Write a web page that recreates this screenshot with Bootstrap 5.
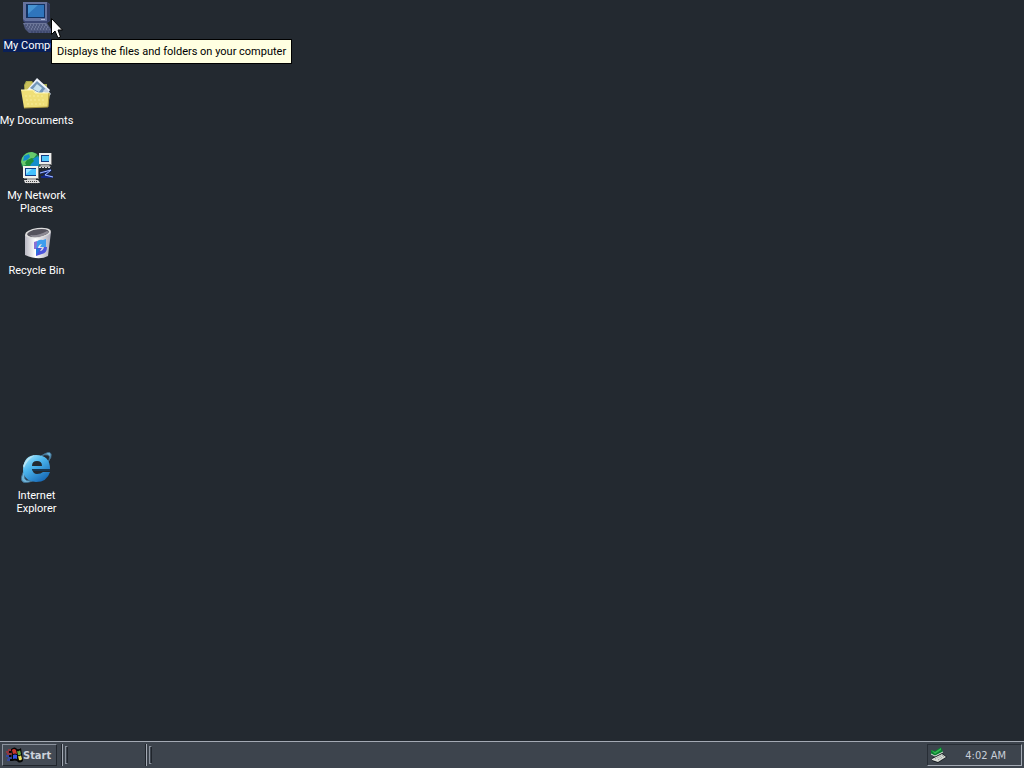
<!DOCTYPE html>
<html lang="en">
<head>
<meta charset="utf-8">
<meta name="viewport" content="width=device-width, initial-scale=1">
<title>Desktop</title>
<link href="https://cdn.jsdelivr.net/npm/bootstrap@5.3.0/dist/css/bootstrap.min.css" rel="stylesheet">
<style>
  body { background: #232930; color: #fff; font: 11px/13px "Roboto", "DejaVu Sans Condensed", sans-serif; cursor: default; }
  .icon-grid { display: grid; grid-template-columns: 73px; grid-template-rows: repeat(9, 75px); grid-auto-rows: 75px; }
  .shortcut { color: #fff; padding-top: 2px; gap: 5px; text-decoration: none; white-space: nowrap; }
  .shortcut svg { width: 32px; height: 32px; flex: none; }
  .shortcut.active .caption-text { background: #0a2058; }
  .slot-last { grid-row: 7; }
  .hint { left: 51px; top: 39px; padding: 6px 5px 5px; line-height: 12px; background: #ffffe1; color: #000; border: 1px solid #000; white-space: nowrap; z-index: 2; }
  .pointer { left: 51px; top: 18px; z-index: 3; }
  .taskbar { background: #3d444d; border-top: 1px solid #a4aab4; padding: 2px; height: 27px; }
  .start { font: bold 11px/13px "DejaVu Sans Condensed", sans-serif; color: #cdd3dc; background: #434a54; border: 1px solid; border-color: #8b929d #20252c #20252c #8b929d; padding: 0 3px; width: 55px; }
  .band { width: 84px; gap: 2px; }
  .bar-line { width: 2px; border-left: 1px solid #20252c; border-right: 1px solid #a4aab4; }
  .grip { width: 3px; margin: 2px 0; border: 1px solid #8b929d; border-right-color: #20252c; }
  .tray { width: 95px; border: 1px solid; border-color: #272d35 #a4aab4 #a4aab4 #272d35; color: #c9cfd8; padding: 1px 15px 0 2px; }
  .tray time { font: 11px/13px "DejaVu Sans Condensed", sans-serif; }
</style>
</head>
<body class="vh-100 d-flex flex-column overflow-hidden">
<main class="flex-fill position-relative overflow-hidden">
  <nav class="icon-grid" aria-label="Desktop icons">
    <a class="shortcut active d-flex flex-column align-items-center text-center" href="#computer">
      <svg viewBox="0 0 32 32" aria-hidden="true">
        <path d="M2 0H26L29 2V19L26 21H4L2 19Z" fill="#3c4773"/><path d="M2 0H26V19H4L2 17Z" fill="#66739e"/><path d="M26 1l3 2v15l-3 2Z" fill="#303a60"/>
        <path d="M5 2H24V16H5Z" fill="#123263"/><path d="M7 3H23V15H7Z" fill="#2f75bd"/><path d="M7 3H17L7 12Z" fill="#4793d2"/>
        <path d="M2 21H26L30 27V31H8L4 27Z" fill="#4d577c"/><path d="M2 21H25L29 28H8Z" fill="#6d7799"/>
        <path d="M4 23H25M6 25H27M8 27H28M10 30H29" stroke="#333c63" stroke-dasharray="2 1"/><path d="M20 17.500h4" stroke="#afb7d4"/>
      </svg>
      <span class="caption-text">My Computer</span>
    </a>
    <a class="shortcut d-flex flex-column align-items-center text-center" href="#documents">
      <svg viewBox="0 0 32 32" aria-hidden="true">
        <path d="M3 8l2-4h6l2 3h13v17H4Z" fill="#a7a94c"/><path d="M4 8l2-3h4l2 3v5H4" fill="#c9bf59"/>
        <path d="M16 1L29 13 23 23 6 13Z" fill="#eef3fb"/><path d="M16 4L25 12 20 17 9 11Z" fill="#7296b9"/><path d="M16 7l5 4-3 4-6-3Z" fill="#c7e2ee"/><path d="M25 11l5 6-2 2-6-5Z" fill="#c4d1e0"/>
        <path d="M0 13H13L15 16H29L27 30 3 31Z" fill="#efdf77"/><path d="M0 13H12L14 16H28" fill="none" stroke="#fff8b5"/><path d="M28 16L27 30 3 31" fill="none" stroke="#aa963d"/><path d="M4 19h20M5 23h19M6 27h17" stroke="#f8ed9b" stroke-dasharray="2 2"/>
      </svg>
      <span>My Documents</span>
    </a>
    <a class="shortcut d-flex flex-column align-items-center text-center" href="#network">
      <svg viewBox="0 0 32 32" aria-hidden="true">
        <circle cx="10" cy="10" r="10" fill="#188451"/><path d="M1 6Q4 0 11 0l5 2-3 4-4 1-2 5-5 2-2-4Z" fill="#68c96c"/><path d="M3 4l5-2 1 3-3 3-4 1ZM10 8l7-4 3 6-4 6-7-2Z" fill="#158dcb"/><path d="M6 8l5-2 2 3-4 4 3 4-5-2-3-4Z" fill="#219139"/>
        <path d="M18 1h12v11H18Z" fill="#eee"/><path d="M30 1h1v12H19v-1h11Z" fill="#777"/><path d="M20 3h8v7h-8Z" fill="#153b81"/><path d="M21 4h7v5h-7Z" fill="#53c8fa"/><path d="M20 13h8l2 2H18Z" fill="#aaa"/><path d="M18 15.500h12" stroke="#ddd" stroke-dasharray="2 1"/>
        <path d="M2 14h15v12H2Z" fill="#f3f3ec"/><path d="M17 14h1v13H3v-1h14Z" fill="#777"/><path d="M4 16h11v8H4Z" fill="#123c88"/><path d="M5 17h10v6H5Z" fill="#45c2ff"/><path d="M5 17h6l-6 5Z" fill="#96e6ff"/>
        <path d="M6 26h9v3H6Z" fill="#aaa"/><path d="M3 28h14l2 3H4Z" fill="#ddd"/><path d="M5 29.500h12M6 31.500h11" stroke="#444" stroke-dasharray="1 1"/>
        <path d="M19 21l11-3-6 5 8 2H20" fill="none" stroke="#142986" stroke-width="2"/><path d="M19 21l11-3-6 5 8 2" fill="none" stroke="#a6bfff"/>
      </svg>
      <span>My Network<br>Places</span>
    </a>
    <a class="shortcut d-flex flex-column align-items-center text-center" href="#recycle">
      <svg viewBox="0 0 32 32" aria-hidden="true">
        <defs><linearGradient id="bin"><stop stop-color="#b9b8c3"/><stop offset=".4" stop-color="#fff"/><stop offset="1" stop-color="#aaa9b7"/></linearGradient></defs>
        <path d="M4 8L30 5 27 29Q18 34 4 28Z" fill="url(#bin)"/><ellipse cx="17" cy="6" rx="13" ry="5" fill="#ddd" transform="rotate(-8 17 6)"/><ellipse cx="17" cy="6" rx="11" ry="3.800" fill="#55535d" transform="rotate(-8 17 6)"/><path d="M9 8q9 1 17-4l2 1q-6 6-17 5Z" fill="#8d8a94"/>
        <path d="M15 21V16q2-4 7-3l3-1v8h-6l2-3q-3 0-4 4Z" fill="#3d9ded"/><path d="M26 20q0 6-5 7l-6 2v-8h6l-2 3q3 0 4-4Z" fill="#4b54dc"/><path d="M13 15l3-1v3l-1 5h-2Z" fill="#8972d5"/><path d="M15 22h4l-3 5h-1Z" fill="#2676dc"/>
      </svg>
      <span>Recycle Bin</span>
    </a>
    <a class="shortcut slot-last d-flex flex-column align-items-center text-center" href="#internet">
      <svg viewBox="0 0 32 32" aria-hidden="true">
        <defs><linearGradient id="globe" x2=".7" y2="1"><stop stop-color="#b1efff"/><stop offset=".45" stop-color="#4cb5ed"/><stop offset="1" stop-color="#1769b6"/></linearGradient></defs>
        <path d="M20 4Q29-2 30 2 31 5 27 10 30 4 27 3 24 2 20 4ZM4 17Q-2 27 2 30 6 32 16 27 6 30 4 27 3 24 4 17Z" fill="#6eb4d9" stroke="#416f8f"/>
        <path fill-rule="evenodd" fill="url(#globe)" d="M29 17H11Q12 22 16 22 20 22 22 20H29Q26 30 15 30 2 29 2 17 3 3 15 3 29 3 29 17ZM11 14H21Q21 9 16 9 11 9 11 14Z"/>
        <path d="M2 14Q5 5 14 3 6 8 3 16Z" fill="#b8e4f4"/><path d="M11 17H29v2H12Z" fill="#173854"/>
      </svg>
      <span>Internet<br>Explorer</span>
    </a>
  </nav>
  <div class="hint position-absolute" role="tooltip">Displays the files and folders on your computer</div>
  <svg class="pointer position-absolute" width="12" height="21" viewBox="0 0 12 21" aria-hidden="true"><path d="M.5.5V16.500L4 13l3 7 2.500-1L7 12h4.500Z" fill="#fff" stroke="#000"/></svg>
</main>
<footer class="taskbar d-flex align-items-stretch">
  <button class="start d-flex align-items-center" type="button">
    <svg width="17" height="16" viewBox="0 0 17 16" aria-hidden="true">
      <path d="M5 2q4-3 6 0 2 1 4-1l2 13q-4 3-6 0-2-1-5 0Z" fill="#050505"/><path d="M6 3q2-2 4 0l1 4q-2-1-4 0Z" fill="#c9372e"/><path d="M11 4q2 1 3-1l1 4q-1 2-3 1Z" fill="#65a641"/><path d="M7 8q2-1 4 0v4q-2-1-4 0Z" fill="#3453df"/><path d="M12 9q2 1 3-1l1 4q-1 2-3 1Z" fill="#efe45c"/>
      <path d="M0 5h3M2 3h3M1 7h5" stroke="#a83239" stroke-width="1.500"/><path d="M0 9h3M2 11h4M1 13h4" stroke="#3048b5" stroke-width="1.500"/><path d="M3 5h2M3 9h2M4 13h2" stroke="#050505" stroke-width="2"/>
    </svg>
    <span>Start</span>
  </button>
  <div class="band d-flex ms-1"><span class="bar-line"></span><span class="grip"></span></div>
  <div class="band d-flex flex-fill"><span class="bar-line"></span><span class="grip"></span></div>
  <div class="tray d-flex align-items-center justify-content-between">
    <svg width="17" height="17" viewBox="0 0 17 17" aria-hidden="true">
      <path d="M2 11L12 6 17 10 8 16 2 14Z" fill="#151a20"/><path d="M2 12L12 7 16 10 8 15 2 13Z" fill="#d9ddd7"/><path d="M5 12l8-4M8 13l6-4" stroke="#858b88" stroke-dasharray="1 1"/>
      <path d="M1 3l4 1 6-4 2 5-8 4-4-2Z" fill="#087d30"/><path d="M1 3l4 2 6-4v2L5 7Z" fill="#35b951"/><path d="M1 7l4 2 8-4" fill="none" stroke="#d7e3d9"/>
    </svg>
    <time datetime="04:02">4:02 AM</time>
  </div>
</footer>
<script src="https://cdn.jsdelivr.net/npm/bootstrap@5.3.0/dist/js/bootstrap.bundle.min.js"></script>
</body>
</html>
